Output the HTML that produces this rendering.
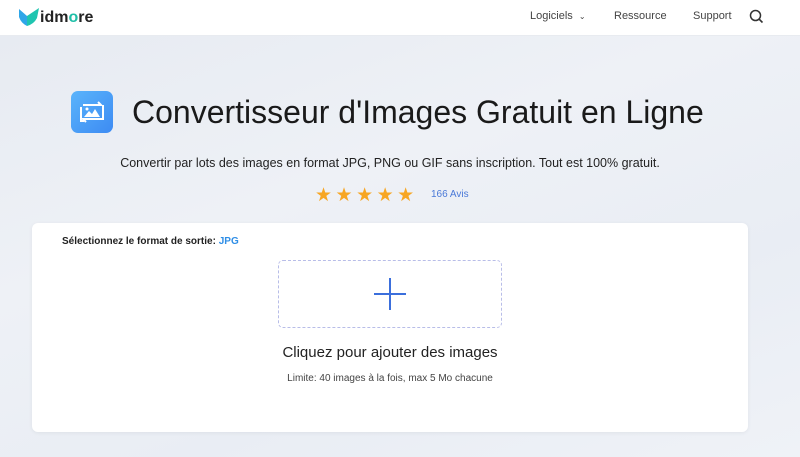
<!DOCTYPE html>
<html><head><meta charset="utf-8"><style>
*{margin:0;padding:0;box-sizing:border-box}
body{width:800px;height:457px;overflow:hidden;font-family:"Liberation Sans",Arial,sans-serif;background:linear-gradient(160deg,#e6eaf1 0%,#eef1f6 40%,#e9edf4 70%,#eff2f7 100%);position:relative}
.hdr{position:absolute;left:0;top:0;width:800px;height:36px;background:#fff;border-bottom:1px solid #e8ebf0}
.logo{position:absolute;left:18px;top:6px}
.brand{position:absolute;left:40px;top:9px;font-size:16px;font-weight:bold;color:#222;letter-spacing:0}
.brand b{color:#1fbfa8}
.nav{position:absolute;top:10px;font-size:11px;color:#444}
.title{position:absolute;left:132px;top:94px;font-size:32px;color:#1a1a1a;white-space:nowrap}
.sub{position:absolute;left:0;width:780px;text-align:center;top:156px;font-size:12.5px;color:#222}
.stars{position:absolute;left:315px;top:184px;font-size:19px;color:#f7a623;letter-spacing:3.5px}
.avis{position:absolute;left:431px;top:189px;font-size:10px;color:#4a79d8}
.card{position:absolute;left:32px;top:223px;width:716px;height:209px;background:#fff;border-radius:6px;box-shadow:0 1px 4px rgba(0,0,0,.06)}
.sel{position:absolute;left:30px;top:13px;font-size:10px;font-weight:bold;color:#222}
.sel span{color:#2f8ee6}
.drop{position:absolute;left:246px;top:37px;width:224px;height:68px;border:1.5px dashed #b8bde8;border-radius:5px}
.cl{position:absolute;left:0;width:716px;text-align:center;top:121px;font-size:15px;color:#222}
.lim{position:absolute;left:0;width:716px;text-align:center;top:150px;font-size:10px;color:#444}
</style></head><body>
<div class="hdr">
<svg class="logo" width="22" height="22" viewBox="0 0 22 22"><path d="M1 3 L9 10 L9 20 Q3 17 1 11Z" fill="#2fa6e8"/><path d="M9 10 L21 2 L19 12 Q16 18 9 20Z" fill="#1fc5b0"/></svg>
<div class="brand">idm<b>o</b>re</div>
<div class="nav" style="left:530px">Logiciels &nbsp;<span style="font-size:8px">⌄</span></div>
<div class="nav" style="left:614px">Ressource</div>
<div class="nav" style="left:693px">Support</div>
<svg style="position:absolute;left:749px;top:9px" width="15" height="15" viewBox="0 0 15 15"><circle cx="6.5" cy="6.5" r="5" fill="none" stroke="#333" stroke-width="1.5"/><path d="M10 10 L13.5 13.5" stroke="#333" stroke-width="1.6"/></svg>
</div>
<svg style="position:absolute;left:71px;top:91px" width="42" height="42" viewBox="0 0 42 42"><defs><linearGradient id="g" x1="0" y1="0" x2="1" y2="1"><stop offset="0" stop-color="#5ab4fb"/><stop offset="1" stop-color="#3d8bf3"/></linearGradient></defs><rect width="42" height="42" rx="7" fill="url(#g)"/><path d="M12 14 H30 L27 11 M30 14" fill="none" stroke="#fff" stroke-width="2"/><path d="M10 16 V30 H13 M32 14 V28 H30" fill="none" stroke="#fff" stroke-width="2"/><path d="M30 28 H12 L15 31" fill="none" stroke="#fff" stroke-width="2"/><path d="M13 26 L18 20 L21 23 L24 18 L29 26Z" fill="#fff"/><circle cx="16" cy="18" r="1.5" fill="#fff"/></svg>
<div class="title">Convertisseur d'Images Gratuit en Ligne</div>
<div class="sub">Convertir par lots des images en format JPG, PNG ou GIF sans inscription. Tout est 100% gratuit.</div>
<div class="stars">★★★★★</div>
<div class="avis">166 Avis</div>
<div class="card">
<div class="sel">Sélectionnez le format de sortie: <span>JPG</span></div>
<div class="drop"><svg style="position:absolute;left:95px;top:17px" width="32" height="32" viewBox="0 0 32 32"><path d="M16 0 V32 M0 16 H32" stroke="#3b6fdc" stroke-width="2"/></svg></div>
<div class="cl">Cliquez pour ajouter des images</div>
<div class="lim">Limite: 40 images à la fois, max 5 Mo chacune</div>
</div>
</body></html>
